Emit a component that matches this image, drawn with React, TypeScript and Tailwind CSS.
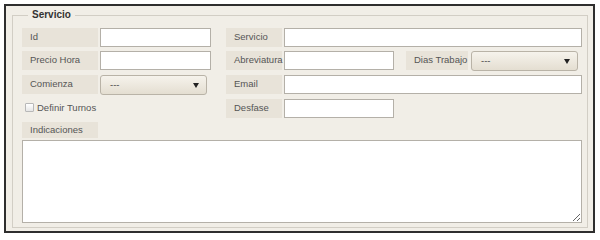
import React from "react";

const font = { fontFamily: '"Liberation Sans", Arial, sans-serif' };

function Label({ text, w, extra = "" }: { text: string; w: string; extra?: string }) {
  return (
    <div className={`${w} ${extra} h-[19px] bg-[#e8e3d9] flex items-center pl-[8px] text-[9.5px] text-[#555] shrink-0 whitespace-nowrap`}>
      {text}
    </div>
  );
}

function Input({ w }: { w: string }) {
  return <div className={`${w} h-[19px] bg-white border border-[#b4b0a8] shrink-0`} />;
}

function Select({ w, extra = "" }: { w: string; extra?: string }) {
  return (
    <div
      className={`${w} ${extra} h-[20px] rounded-[3px] border border-[#b9b3a7] bg-gradient-to-b from-[#f6f3ec] to-[#e4ded1] flex items-center justify-between pl-[9px] pr-[7px] text-[9.5px] text-[#444] shrink-0`}
    >
      <span>---</span>
      <svg width="6" height="5" viewBox="0 0 6 5">
        <path d="M0 0 L6 0 L3 5 Z" fill="#222" />
      </svg>
    </div>
  );
}

export default function App() {
  return (
    <div className="w-[600px] h-[240px] bg-white pt-[4px] pl-[4px]" style={font}>
      <div className="w-[591px] h-[229px] border-2 border-[#2e2e2e] bg-[#f1eee7] px-[6px] pt-[2px]">
        <fieldset className="border border-[#d2cec5] pl-[9px] pr-[5px] pb-[4px]">
          <legend className="ml-[6px] px-[4px] text-[10px] font-bold text-[#333] leading-[14px]">
            Servicio
          </legend>
          <div className="flex flex-col gap-[4px] pt-[6px]">
            {/* Row 1 */}
            <div className="flex">
              <div className="flex gap-[2px] w-[204px]">
                <Label text="Id" w="w-[76px]" />
                <Input w="w-[111px]" />
              </div>
              <div className="flex gap-[2px]">
                <Label text="Servicio" w="w-[56px]" />
                <Input w="w-[298px]" />
              </div>
            </div>
            {/* Row 2 */}
            <div className="flex">
              <div className="flex gap-[2px] w-[204px]">
                <Label text="Precio Hora" w="w-[76px]" />
                <Input w="w-[111px]" />
              </div>
              <div className="flex gap-[2px]">
                <Label text="Abreviatura" w="w-[56px]" />
                <Input w="w-[110px]" />
                <Label text="Dias Trabajo" w="w-[62px]" extra="ml-[10px]" />
                <Select w="w-[107px]" extra="ml-[1px]" />
              </div>
            </div>
            {/* Row 3 */}
            <div className="flex">
              <div className="flex gap-[2px] w-[204px]">
                <Label text="Comienza" w="w-[76px]" />
                <Select w="w-[107px]" />
              </div>
              <div className="flex gap-[2px]">
                <Label text="Email" w="w-[56px]" />
                <Input w="w-[298px]" />
              </div>
            </div>
            {/* Row 4 */}
            <div className="flex">
              <div className="flex items-center gap-[3px] w-[204px] pl-[3px]">
                <div className="w-[9px] h-[9px] border border-[#b8b8b8] bg-gradient-to-b from-white to-[#e6e6e6] rounded-[1px] -mt-[3px]" />
                <span className="text-[9.5px] text-[#555] -mt-[1px]">Definir Turnos</span>
              </div>
              <div className="flex gap-[2px]">
                <Label text="Desfase" w="w-[56px]" />
                <Input w="w-[110px]" />
              </div>
            </div>
            {/* Row 5 */}
            <div className="flex flex-col gap-[2px]">
              <div className="w-[76px] h-[16px] bg-[#e8e3d9] flex items-center pl-[8px] text-[9.5px] text-[#555]">
                Indicaciones
              </div>
              <textarea className="w-[560px] h-[83px] bg-white border border-[#b4b0a8] resize block outline-none" />
            </div>
          </div>
        </fieldset>
      </div>
    </div>
  );
}
